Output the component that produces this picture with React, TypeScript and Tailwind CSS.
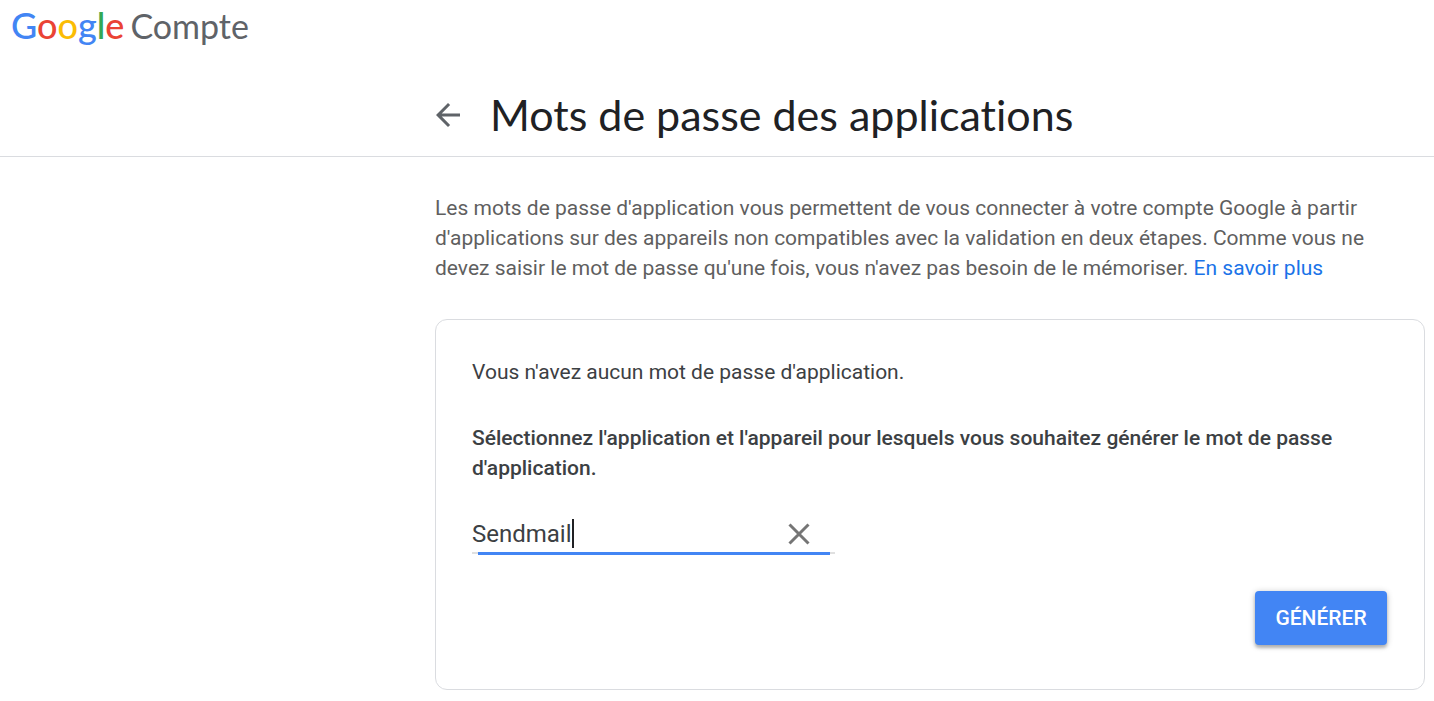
import { useState } from "react";

function GoogleAccountLogo() {
  return (
    <a
      href="#accueil"
      aria-label="Compte Google"
      className="flex items-baseline gap-[6px] font-['Lato',sans-serif] leading-[50px]"
    >
      <span className="text-[36px] font-medium">
        <span className="text-[#4285f4]">G</span>
        <span className="text-[#ea4335]">o</span>
        <span className="text-[#fbbc04]">o</span>
        <span className="text-[#4285f4]">g</span>
        <span className="text-[#34a853]">l</span>
        <span className="text-[#ea4335]">e</span>
      </span>
      <span className="text-[34px] text-[#5f6368]">Compte</span>
    </a>
  );
}

export default function App() {
  const [name, setName] = useState("Sendmail");

  return (
    <div className="min-h-screen bg-white font-['Roboto',sans-serif] text-[#3c4043]">
      <header className="border-b border-[#dadce0]">
        <div className="flex h-[50px] items-center pl-[11px]">
          <GoogleAccountLogo />
        </div>
        <div className="flex h-[106px] items-center gap-[24px] pt-[24px] pl-[430px]">
          <button type="button" aria-label="Retour" className="text-[#5f6368]">
            <svg viewBox="0 0 24 24" className="size-[36px]" fill="currentColor" aria-hidden="true">
              <path d="M20 11H7.83l5.59-5.59L12 4l-8 8 8 8 1.41-1.41L7.83 13H20v-2z" />
            </svg>
          </button>
          <h1 className="font-['Lato',sans-serif] text-[43px] leading-[52px] text-[#202124] [font-variant-ligatures:none]">
            Mots de passe des applications
          </h1>
        </div>
      </header>

      <main className="pt-[36px] pr-[9px] pb-[11px] pl-[435px]">
        <p className="text-[21px] leading-[30px] text-[#5f5f5f]">
          Les mots de passe d'application vous permettent de vous connecter à votre compte Google à partir
          <br />
          d'applications sur des appareils non compatibles avec la validation en deux étapes. Comme vous ne
          <br />
          devez saisir le mot de passe qu'une fois, vous n'avez pas besoin de le mémoriser.{" "}
          <a href="#en-savoir-plus" className="text-[#1a73e8]">
            En savoir plus
          </a>
        </p>

        <section className="mt-[36px] rounded-xl border border-[#dadce0] pt-[37px] pr-[37px] pb-[44px] pl-[36px]">
          <p className="text-[21px] leading-[30px]">Vous n'avez aucun mot de passe d'application.</p>
          <p className="mt-[36px] text-[21px] leading-[30px] font-medium">
            Sélectionnez l'application et l'appareil pour lesquels vous souhaitez générer le mot de passe
            d'application.
          </p>

          <form onSubmit={(event) => event.preventDefault()}>
            <div className="relative mt-[33px] flex h-[38px] w-[363px] items-start border-b-2 border-[#e0e0e0]">
              <div className="relative flex h-[36px] min-w-0 flex-1 items-center">
                <input
                  type="text"
                  aria-label="Nom de l'application"
                  value={name}
                  onChange={(event) => setName(event.target.value)}
                  className="w-full bg-transparent text-[24px] leading-[34px] caret-transparent outline-none"
                />
                <span
                  aria-hidden="true"
                  className="pointer-events-none absolute top-[3px] left-0 h-[29px] border-r-2 border-[#202124] text-[24px] leading-[29px] whitespace-pre text-transparent select-none before:invisible before:content-[attr(data-value)]"
                  data-value={name}
                />
              </div>
              <button
                type="button"
                aria-label="Effacer"
                onClick={() => setName("")}
                className="mr-[18px] text-[#757575]"
              >
                <svg viewBox="0 0 36 36" className="size-[36px]" fill="none" stroke="currentColor" strokeWidth="3" aria-hidden="true">
                  <path d="M8.5 8.5l19 19M27.5 8.5l-19 19" />
                </svg>
              </button>
              <span aria-hidden="true" className="absolute -bottom-[3px] left-[6px] right-[5px] h-[3px] bg-[#4285f4]" />
            </div>

            <div className="mt-[37px] flex justify-end">
              <button
                type="submit"
                className="h-[54px] w-[132px] rounded-[4px] bg-[#4285f4] pt-[2px] text-[21px] font-medium text-white uppercase shadow-[0_3px_3px_rgba(0,0,0,0.2),0_1px_6px_rgba(0,0,0,0.24)]"
              >
                Générer
              </button>
            </div>
          </form>
        </section>
      </main>
    </div>
  );
}
